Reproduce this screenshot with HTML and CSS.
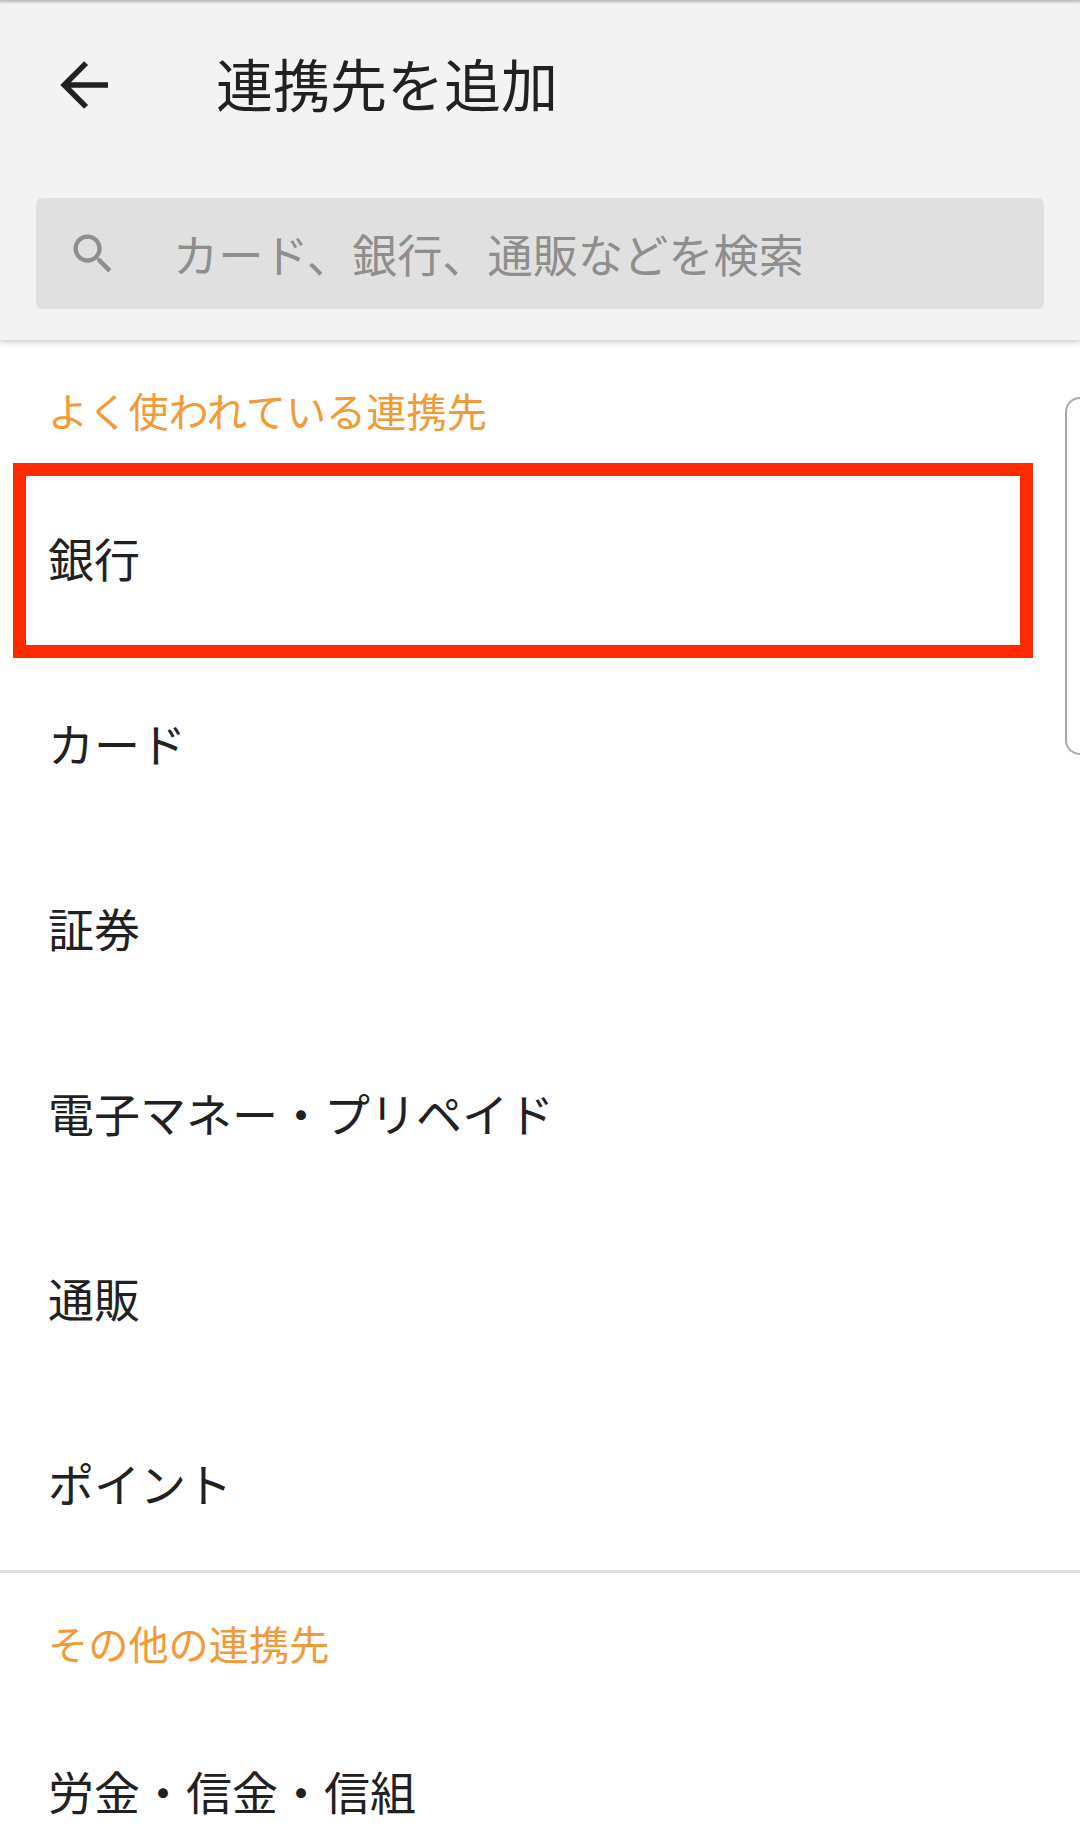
FILE: index.html
```html
<!DOCTYPE html>
<html lang="ja">
<head>
  <meta charset="UTF-8">
  <title>連携先を追加</title>
  <link rel="stylesheet" href="styles.css">
</head>
<body>
  <header class="header">
    <div class="title-bar">
      <svg class="back-icon" viewBox="0 0 24 24"><path d="M20 12H5.4M12.7 4.7 5.4 12l7.3 7.3"/></svg>
      <h1 class="title">連携先を追加</h1>
    </div>
    <div class="search">
      <svg class="search-icon" viewBox="0 0 24 24"><path d="M15.5 14h-.79l-.28-.27C15.41 12.59 16 11.11 16 9.5 16 5.91 13.09 3 9.5 3S3 5.91 3 9.5 5.91 16 9.5 16c1.61 0 3.09-.59 4.23-1.57l.27.28v.79l5 4.99L20.49 19l-4.99-5zm-6 0C7.01 14 5 11.99 5 9.5S7.01 5 9.5 5 14 7.01 14 9.5 11.99 14 9.5 14z"/></svg>
      <span class="search-text">カード、銀行、通販などを検索</span>
    </div>
  </header>

  <section class="section">
    <h2 class="section-label">よく使われている連携先</h2>
    <ul class="rows">
      <li class="row">銀行</li>
      <li class="row">カード</li>
      <li class="row">証券</li>
      <li class="row">電子マネー・プリペイド</li>
      <li class="row">通販</li>
      <li class="row">ポイント</li>
    </ul>
  </section>

  <section class="section section-other">
    <h2 class="section-label">その他の連携先</h2>
    <ul class="rows">
      <li class="row">労金・信金・信組</li>
    </ul>
  </section>

  <div class="highlight"></div>
  <div class="edge-handle"></div>
</body>
</html>
```

FILE: styles.css
```css
html, body { height: 100%; }
body {
  margin: 0; background: #fff; color: #212121; overflow: hidden; position: relative;
  font-family: "Noto Sans CJK JP", "Noto Sans", sans-serif;
}
.header {
  background: #f3f3f3; height: 340px; padding: 0 36px; box-sizing: border-box;
  box-shadow: inset 0 4px 3px -2px rgba(0,0,0,.25), 0 2px 6px rgba(0,0,0,.22);
}
.title-bar { display: flex; align-items: center; height: 172px; margin-bottom: 26px; }
.back-icon {
  width: 72px; height: 72px; margin: 0 0 3px 12px; fill: none;
  stroke: #212121; stroke-width: 1.85;
}
.title { margin: 0 0 7px 96px; font-size: 57px; font-weight: 400; line-height: 1; }
.search {
  display: flex; align-items: center; height: 111px;
  background: #e0e0e0; border-radius: 6px;
}
.search-icon { width: 52px; height: 52px; margin-left: 31px; fill: #8e8e8e; flex: none; }
.search-text { margin-left: 54px; font-size: 45.2px; color: #8e8e8e; line-height: 1; }

.section-label {
  margin: 0; padding: 40px 48px 35px; font-size: 40.2px; font-weight: 400;
  line-height: 60px; color: #f39a38;
}
.rows { list-style: none; margin: 0; padding: 0; display: flex; flex-direction: column; gap: 15px; }
.row {
  height: 170px; box-sizing: border-box; display: flex; align-items: center;
  padding: 0 0 7px 48px; font-size: 46px;
}
.section-other { border-top: 3px solid #e0e0e0; }

/* annotation box drawn over the first row */
.highlight {
  position: absolute; left: 13px; top: 463px; width: 1020px; height: 195px;
  box-sizing: border-box; border: 13px solid #ff2a00;
}
.edge-handle {
  position: absolute; right: 0; top: 397px; width: 15px; height: 358px; box-sizing: border-box;
  border: 2px solid #aaa; border-right: none; border-radius: 20px 0 0 20px;
}
```
